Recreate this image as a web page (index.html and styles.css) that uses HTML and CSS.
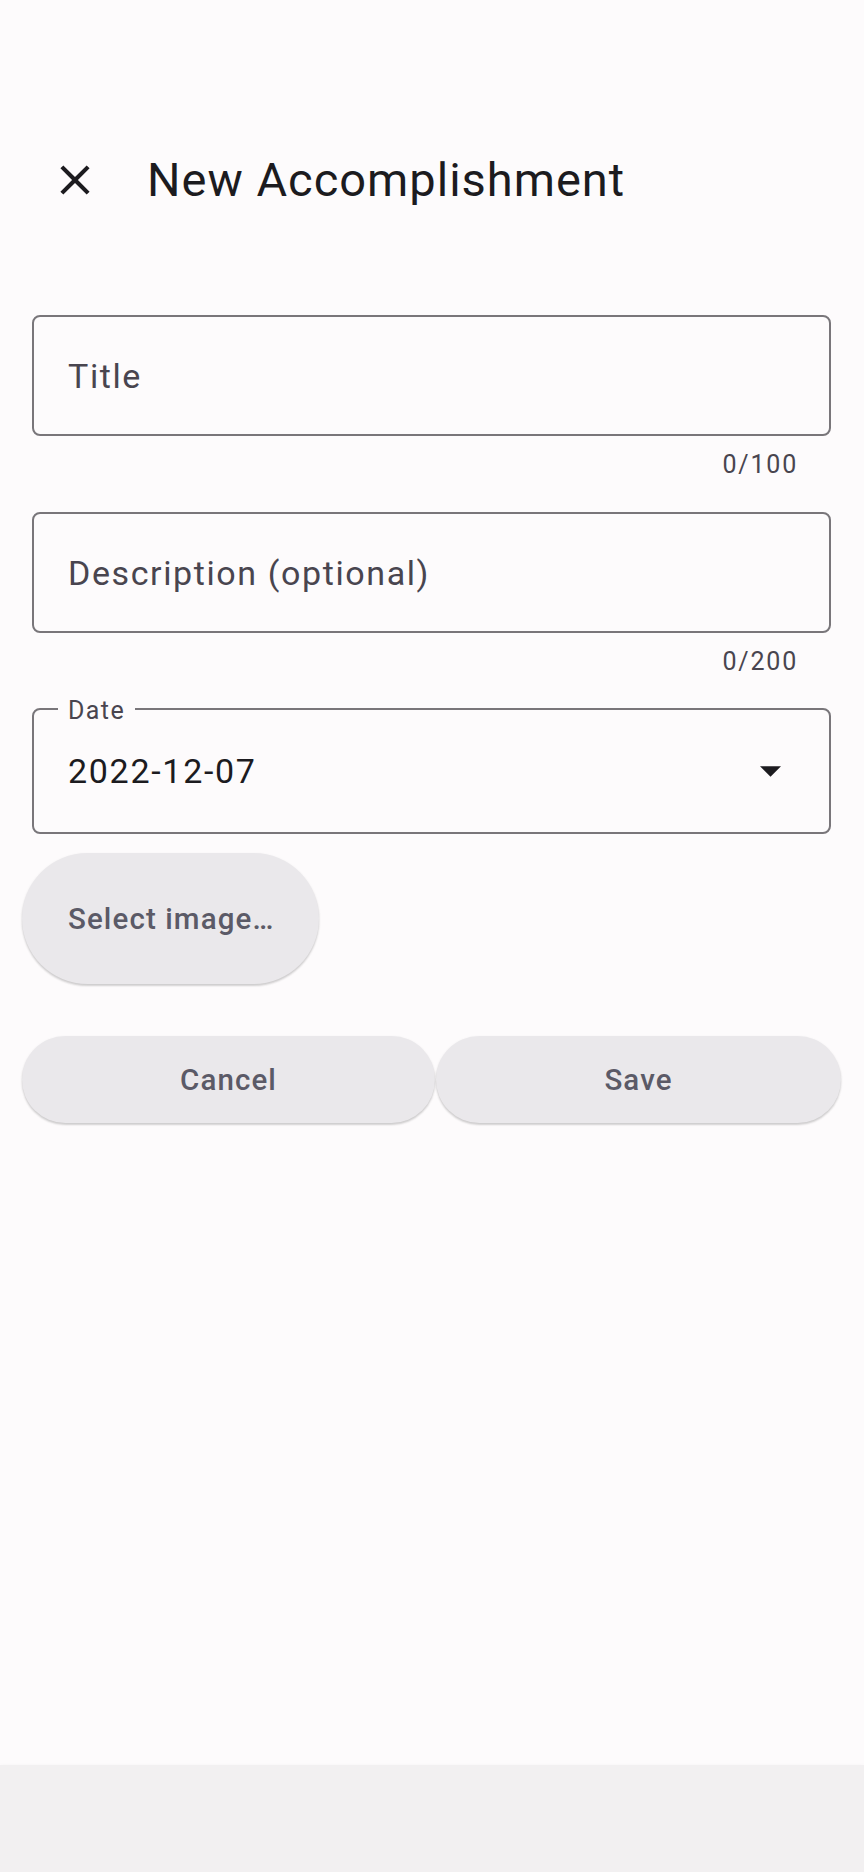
FILE: index.html
```html
<!DOCTYPE html>
<html lang="en">
<head>
<meta charset="utf-8">
<title>New Accomplishment</title>
<link rel="stylesheet" href="styles.css">
</head>
<body>
<div class="screen">
  <header class="app-bar">
    <button class="icon-btn" aria-label="Close">
      <svg viewBox="0 0 24 24" width="50" height="50"><path d="M19 6.41L17.59 5 12 10.59 6.41 5 5 6.41 10.59 12 5 17.59 6.41 19 12 13.41 17.59 19 19 17.59 13.41 12z" fill="#1c1b1f"/></svg>
    </button>
    <h1 class="app-title">New Accomplishment</h1>
  </header>

  <main class="form">
    <div class="field">
      <span class="placeholder">Title</span>
    </div>
    <div class="counter">0/100</div>

    <div class="field field-gap">
      <span class="placeholder">Description (optional)</span>
    </div>
    <div class="counter">0/200</div>

    <div class="field field-date">
      <span class="float-label">Date</span>
      <span class="value">2022-12-07</span>
      <svg class="drop" viewBox="7 10 10 5" width="21" height="11"><path d="M7 10l5 5 5-5z" fill="#1c1b1f"/></svg>
    </div>

    <button class="pill pill-image">Select image…</button>

    <div class="actions">
      <button class="pill pill-action">Cancel</button>
      <button class="pill pill-action">Save</button>
    </div>
  </main>

  <footer class="nav-band"></footer>
</div>
</body>
</html>
```

FILE: styles.css
```css
* { box-sizing: border-box; }

html, body {
  margin: 0;
  padding: 0;
  background: #fdfbfc;
  font-family: Roboto, "Noto Sans", "Liberation Sans", sans-serif;
}

.screen {
  width: 864px;
  min-height: 1872px;
  display: flex;
  flex-direction: column;
}

.app-bar {
  display: flex;
  align-items: center;
  height: 104px;
  margin-top: 128px;
  padding-left: 50px;
}

.icon-btn {
  width: 50px;
  height: 50px;
  padding: 0;
  border: 0;
  background: none;
  display: flex;
}

.app-title {
  margin: 0 0 0 47px;
  font-size: 47px;
  font-weight: 400;
  color: #1c1b1f;
  line-height: 56px;
  letter-spacing: 1px;
}

.form {
  display: flex;
  flex-direction: column;
  padding: 0 33px 0 32px;
  flex: 1;
}

.field {
  position: relative;
  height: 121px;
  border: 2px solid #79767a;
  border-radius: 8px;
  display: flex;
  align-items: center;
  padding: 0 34px;
  margin-top: 83px;
}

.field-gap { margin-top: 30px; }

.placeholder {
  font-size: 34px;
  color: #49454f;
  letter-spacing: 1.6px;
  line-height: 40px;
}

.counter {
  align-self: flex-end;
  margin: 12px 33px 0 0;
  font-size: 25px;
  line-height: 34px;
  color: #49454f;
  letter-spacing: 1.8px;
}

.field-date {
  margin-top: 29px;
  height: 126px;
  justify-content: space-between;
  padding-right: 48px;
}

.float-label {
  position: absolute;
  left: 24px;
  top: -12px;
  padding: 0 10px;
  background: #fdfbfc;
  font-size: 25px;
  line-height: 25px;
  color: #49454f;
  letter-spacing: 1.4px;
}

.value {
  font-size: 34px;
  line-height: 40px;
  color: #1c1b1f;
  letter-spacing: 1.7px;
}

.drop { display: block; }

.pill {
  border: 0;
  background: #eae8eb;
  color: #5b5a67;
  font-family: Roboto, "Noto Sans", "Liberation Sans", sans-serif;
  font-weight: 500;
  font-size: 29.5px;
  letter-spacing: 1.1px;
  box-shadow: 0 2px 2px rgba(0,0,0,0.14), 0 1px 3px rgba(0,0,0,0.08);
  padding: 0;
}

.pill-image {
  align-self: flex-start;
  margin: 19px 0 0 -10px;
  height: 131px;
  border-radius: 66px;
  padding: 0 45px 0 46px;
}

.actions {
  display: grid;
  grid-template-columns: 413px 1fr;
  gap: 1px;
  margin: 52px -10px 0 -10px;
}

.pill-action {
  height: 87px;
  border-radius: 44px;
}

.nav-band {
  height: 107px;
  background: #f2f0f1;
  box-shadow: 0 -1px 3px rgba(0,0,0,0.02);
}
```
